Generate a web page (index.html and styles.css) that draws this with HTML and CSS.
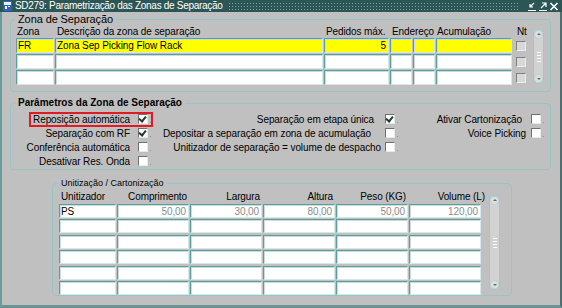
FILE: index.html
```html
<!DOCTYPE html>
<html lang="pt">
<head>
  <meta charset="UTF-8" />
  <title>SD279</title>
  <link rel="stylesheet" href="styles.css">
</head>
<body>
  <div class="window">
    <div class="titlebar">
      <svg class="app-icon" width="9" height="10" viewBox="0 0 9 10">
        <rect x="0.5" y="0.5" width="8" height="9" fill="#e8f0ff" stroke="#2a62c8"/>
        <rect x="1" y="4" width="7" height="5" fill="#2a62c8"/>
        <rect x="2" y="5" width="2" height="3" fill="#fff"/>
        <rect x="5" y="5" width="2" height="1" fill="#fff"/>
      </svg>
      <span class="title">SD279: Parametrização das Zonas de Separação</span>
      <div class="dots"></div>
      <div class="win-buttons">
        <svg width="10" height="9" viewBox="0 0 10 9"><path d="M1 8.5h8M7 1L3 5M3 2v3h3" stroke="#fff" stroke-width="1.2" fill="none"/></svg>
        <svg width="10" height="9" viewBox="0 0 10 9"><path d="M1 8.5h8M3 6l5-5M4 1h4v4" stroke="#fff" stroke-width="1.2" fill="none"/></svg>
        <svg width="10" height="9" viewBox="0 0 10 9"><path d="M1.5 1l7 7M8.5 1l-7 7" stroke="#fff" stroke-width="1.6" fill="none"/></svg>
      </div>
    </div>

    <div class="content">
      <fieldset class="frame zone-frame">
        <legend>Zona de Separação</legend>
        <div class="zone-grid">
          <div class="head">Zona</div>
          <div class="head pad2">Descrição da zona de separação</div>
          <div class="head pad2">Pedidos máx.</div>
          <div class="head span2">Endereço</div>
          <div class="head">Acumulação</div>
          <div class="head nt">Nt</div>
          <div class="scrollbar zone-scroll">
            <span class="arrow up"></span>
            <span class="grip"></span>
            <span class="arrow down"></span>
          </div>

          <div class="field current">FR</div>
          <div class="field current pad2">Zona Sep Picking Flow Rack</div>
          <div class="field current num">5</div>
          <div class="field current"></div>
          <div class="field current"></div>
          <div class="field current"></div>
          <div class="check-cell"><span class="check disabled"></span></div>

          <div class="field"></div>
          <div class="field"></div>
          <div class="field"></div>
          <div class="field"></div>
          <div class="field"></div>
          <div class="field"></div>
          <div class="check-cell"><span class="check disabled"></span></div>

          <div class="field"></div>
          <div class="field"></div>
          <div class="field"></div>
          <div class="field"></div>
          <div class="field"></div>
          <div class="field"></div>
          <div class="check-cell"><span class="check disabled"></span></div>
        </div>
      </fieldset>

      <fieldset class="frame params-frame">
        <legend class="bold">Parâmetros da Zona de Separação</legend>
        <div class="params">
          <div class="param-col col1">
            <div class="param highlight"><span class="m8">Reposição automática</span><span class="check checked"></span><i class="dot"></i></div>
            <div class="param"><span class="m8">Separação com RF</span><span class="check checked"></span><i class="dot"></i></div>
            <div class="param"><span class="m8">Conferência automática</span><span class="check"></span><i class="dot"></i></div>
            <div class="param"><span class="m8">Desativar Res. Onda</span><span class="check"></span><i class="dot"></i></div>
          </div>
          <div class="param-col col2">
            <div class="param"><span class="m11">Separação em etapa única</span><span class="check checked"></span><i class="dot"></i></div>
            <div class="param"><span class="m14">Depositar a separação em zona de acumulação</span><span class="check"></span><i class="dot"></i></div>
            <div class="param"><span class="m4">Unitizador de separação = volume de despacho</span><span class="check"></span><i class="dot"></i></div>
          </div>
          <div class="param-col col3">
            <div class="param"><span class="m9">Ativar Cartonização</span><span class="check"></span><i class="dot"></i></div>
            <div class="param"><span class="m5">Voice Picking</span><span class="check"></span><i class="dot"></i></div>
          </div>
        </div>
      </fieldset>

      <fieldset class="frame unit-frame">
        <legend class="small">Unitização / Cartonização</legend>
        <div class="unit-wrap">
          <div class="unit-grid">
            <div class="head pad2">Unitizador</div>
            <div class="head right">Comprimento</div>
            <div class="head right">Largura</div>
            <div class="head right">Altura</div>
            <div class="head right">Peso (KG)</div>
            <div class="head right over">Volume (L)</div>

            <div class="field pad2">PS</div>
            <div class="field num muted">50,00</div>
            <div class="field num muted">30,00</div>
            <div class="field num muted">80,00</div>
            <div class="field num muted">50,00</div>
            <div class="field num muted">120,00</div>

            <div class="field"></div><div class="field"></div><div class="field"></div><div class="field"></div><div class="field"></div><div class="field"></div>
            <div class="field"></div><div class="field"></div><div class="field"></div><div class="field"></div><div class="field"></div><div class="field"></div>
            <div class="field"></div><div class="field"></div><div class="field"></div><div class="field"></div><div class="field"></div><div class="field"></div>
            <div class="field"></div><div class="field"></div><div class="field"></div><div class="field"></div><div class="field"></div><div class="field"></div>
            <div class="field"></div><div class="field"></div><div class="field"></div><div class="field"></div><div class="field"></div><div class="field"></div>
          </div>
          <div class="scrollbar unit-scroll">
            <span class="arrow up"></span>
            <span class="grip"></span>
            <span class="arrow down"></span>
          </div>
        </div>
      </fieldset>
    </div>
  </div>
</body>
</html>
```

FILE: styles.css
```css
body {
  margin: 0;
  font-family: 'Liberation Sans', Arial, sans-serif;
  font-size: 10px;
  letter-spacing: -0.1px;
  color: #000;
}

.window {
  width: 562px;
  height: 308px;
  box-sizing: border-box;
  background: #c0c0c0;
  border-left: 2px solid #6a9c9c;
  border-right: 2px solid #4d6f6f;
  border-bottom: 3px solid #6a9494;
  display: flex;
  flex-direction: column;
}

.titlebar {
  height: 12px;
  margin-left: -2px;
  margin-right: -2px;
  background: #2c5656;
  display: flex;
  align-items: center;
  color: #fff;
  font-size: 10px;
  letter-spacing: -0.3px;
  line-height: 12px;
}

.app-icon {
  margin: 0 3px 0 3px;
  flex: none;
}

.title {
  white-space: nowrap;
  padding-right: 6px;
}

.dots {
  flex: 1;
  height: 8px;
  background-image: radial-gradient(circle, #7aa3a3 0.7px, transparent 0.9px);
  background-size: 3px 3px;
}

.win-buttons {
  display: flex;
  gap: 1px;
  padding: 0 3px 0 8px;
}

.content {
  flex: 1;
  padding-left: 8px;
}

.frame {
  margin: 0;
  padding: 0;
  border: 1px solid #94c6c6;
  border-radius: 4px;
  min-width: 0;
}

.frame legend {
  padding: 0 3px;
  margin-left: 4px;
  line-height: 12px;
  font-size: 11px;
  letter-spacing: -0.1px;
}

.frame legend.bold {
  font-weight: bold;
  font-size: 10px;
  letter-spacing: 0;
}

.frame legend.small {
  font-size: 9px;
  letter-spacing: 0;
}

/* zona de separação */
.zone-frame {
  width: 541px;
  height: 79px;
  box-sizing: border-box;
  margin-top: 1px;
}

.zone-grid {
  display: grid;
  grid-template-columns: 38px 268px 65px 22px 22px 76px 19px 11px;
  grid-template-rows: 11px 15px 15px 15px;
  column-gap: 1px;
  row-gap: 1px;
  padding: 1px 0 0 5px;
}

.head {
  line-height: 11px;
  white-space: nowrap;
  padding-left: 1px;
}

.pad2 {
  padding-left: 2px;
}

.span2 {
  grid-column: span 2;
  padding-left: 2px;
}

.nt {
  padding-left: 4px;
}

.right {
  text-align: right;
  padding-right: 2px;
}

.over {
  margin-right: -6px;
}

.field {
  background: #fff;
  border: 1px solid;
  border-color: #5f9c9c #d6e8e8 #d6e8e8 #5f9c9c;
  box-shadow: inset 1px 1px 0 #c8dede;
  line-height: 13px;
  padding-left: 1px;
  white-space: nowrap;
  overflow: hidden;
}

.field.current {
  background: #ffff00;
}

.field.num {
  text-align: right;
  padding-right: 2px;
}

.field.muted {
  color: #8c8c8c;
}

.check-cell {
  padding: 3px 0 0 3px;
}

.check {
  display: inline-block;
  width: 10px;
  height: 10px;
  box-sizing: border-box;
  background: #fff;
  border: 1px solid;
  border-color: #707070 #e8e8e8 #e8e8e8 #707070;
  position: relative;
  flex: none;
}

.check.disabled {
  background: #d8d8d8;
  border-color: #808080 #ececec #ececec #808080;
}

.check.checked::after {
  content: "";
  position: absolute;
  left: 1px;
  top: 0px;
  width: 5px;
  height: 3px;
  border-left: 2px solid #1e3a30;
  border-bottom: 2px solid #1e3a30;
  transform: rotate(-50deg);
  transform-origin: 4px 4px;
}

.dot {
  display: inline-block;
  width: 1px;
  height: 1px;
  background: #909090;
  align-self: flex-end;
  margin: 0 0 2px 2px;
  flex: none;
}

/* scrollbars */
.scrollbar {
  background: #d2d2d2;
  border: 1px solid #9ccaca;
  border-radius: 5px;
  display: flex;
  flex-direction: column;
  align-items: center;
  justify-content: space-between;
  box-sizing: border-box;
}

.zone-scroll {
  grid-column: 8;
  grid-row: 1 / span 4;
  margin-top: 3px;
  margin-bottom: 1px;
}

.arrow {
  width: 9px;
  height: 9px;
  box-sizing: border-box;
  border: 1px solid #b4d4d4;
  border-radius: 4px;
  background: #dedede;
  position: relative;
}

.arrow::after {
  content: "";
  position: absolute;
  left: 2px;
  border-left: 2px solid transparent;
  border-right: 2px solid transparent;
}

.arrow.up::after {
  top: 2px;
  border-bottom: 2px solid #6a6a6a;
}

.arrow.down::after {
  top: 3px;
  border-top: 2px solid #6a6a6a;
}

.grip {
  width: 4px;
  height: 11px;
  background-image: radial-gradient(circle, #ffffff 0.8px, transparent 1px);
  background-size: 2px 3px;
}

/* parâmetros */
.params-frame {
  width: 541px;
  height: 73px;
  box-sizing: border-box;
  margin-top: 5px;
}

.params {
  display: flex;
  padding-top: 3px;
}

.param-col {
  display: grid;
  grid-auto-rows: 14px;
  justify-items: end;
  align-items: center;
}

.col1 {
  width: 140px;
}

.col2 {
  width: 247px;
}

.col3 {
  width: 146px;
}

.param {
  display: flex;
  align-items: center;
  white-space: nowrap;
  height: 11px;
}

.m4 { margin-right: 4px; }
.m5 { margin-right: 5px; }
.m8 { margin-right: 8px; }
.m9 { margin-right: 9px; }
.m11 { margin-right: 11px; }
.m14 { margin-right: 14px; }

.highlight {
  border: 2px solid #e01b24;
  padding-left: 2px;
  margin-right: -2px;
  height: 11px;
}

/* unitização */
.unit-frame {
  width: 460px;
  height: 119px;
  box-sizing: border-box;
  margin: 7px 0 0 42px;
}

.unit-frame legend {
  margin-left: 5px;
}

.unit-wrap {
  display: flex;
  padding: 2px 0 0 6px;
  gap: 8px;
}

.unit-grid {
  display: grid;
  grid-template-columns: 57px 72px 72px 72px 72px 72px;
  grid-template-rows: 11px;
  grid-auto-rows: 14px;
  column-gap: 1px;
  row-gap: 1.5px;
}

.unit-grid .head {
  line-height: 11px;
}

.unit-scroll {
  width: 11px;
  height: 95px;
  margin-top: 4px;
}
```
